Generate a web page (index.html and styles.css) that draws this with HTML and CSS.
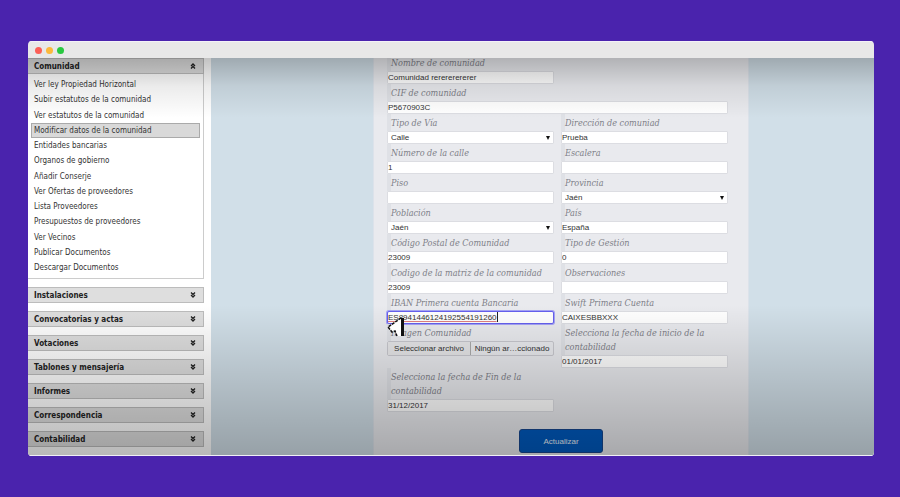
FILE: index.html
```html
<!DOCTYPE html>
<html lang="es">
<head>
  <meta charset="UTF-8">
  <title>Modificar datos de la comunidad</title>
  <link rel="stylesheet" href="styles.css">
</head>
<body>

<div class="window">
  <header class="titlebar">
    <span class="dot red"></span>
    <span class="dot yellow"></span>
    <span class="dot green"></span>
  </header>

  <div class="content">
    <nav class="sidebar">
      <section class="open">
        <button class="group" type="button">Comunidad
          <svg class="chevron up" viewBox="0 0 6 6"><path d="M1 3L3 1L5 3M1 5.5L3 3.5L5 5.5"/></svg>
        </button>
        <div class="links">
          <a href="#">Ver ley Propiedad Horizontal</a>
          <a href="#">Subir estatutos de la comunidad</a>
          <a href="#">Ver estatutos de la comunidad</a>
          <a href="#" class="active">Modificar datos de la comunidad</a>
          <a href="#">Entidades bancarias</a>
          <a href="#">Organos de gobierno</a>
          <a href="#">Añadir Conserje</a>
          <a href="#">Ver Ofertas de proveedores</a>
          <a href="#">Lista Proveedores</a>
          <a href="#">Presupuestos de proveedores</a>
          <a href="#">Ver Vecinos</a>
          <a href="#">Publicar Documentos</a>
          <a href="#">Descargar Documentos</a>
        </div>
      </section>
      <button class="group" type="button">Instalaciones
        <svg class="chevron" viewBox="0 0 6 6"><path d="M1 .5L3 2.5L5 .5M1 3L3 5L5 3"/></svg>
      </button>
      <button class="group" type="button">Convocatorias y actas
        <svg class="chevron" viewBox="0 0 6 6"><path d="M1 .5L3 2.5L5 .5M1 3L3 5L5 3"/></svg>
      </button>
      <button class="group" type="button">Votaciones
        <svg class="chevron" viewBox="0 0 6 6"><path d="M1 .5L3 2.5L5 .5M1 3L3 5L5 3"/></svg>
      </button>
      <button class="group" type="button">Tablones y mensajería
        <svg class="chevron" viewBox="0 0 6 6"><path d="M1 .5L3 2.5L5 .5M1 3L3 5L5 3"/></svg>
      </button>
      <button class="group" type="button">Informes
        <svg class="chevron" viewBox="0 0 6 6"><path d="M1 .5L3 2.5L5 .5M1 3L3 5L5 3"/></svg>
      </button>
      <button class="group" type="button">Correspondencia
        <svg class="chevron" viewBox="0 0 6 6"><path d="M1 .5L3 2.5L5 .5M1 3L3 5L5 3"/></svg>
      </button>
      <button class="group" type="button">Contabilidad
        <svg class="chevron" viewBox="0 0 6 6"><path d="M1 .5L3 2.5L5 .5M1 3L3 5L5 3"/></svg>
      </button>
    </nav>

    <main class="main">
      <form class="form">
        <div class="field first">
          <label for="nombre">Nombre de comunidad</label>
          <input type="text" id="nombre" value="Comunidad rerererererer">
        </div>
        <div class="field wide">
          <label for="cif">CIF de comunidad</label>
          <input type="text" id="cif" value="P5670903C">
        </div>
        <div class="field">
          <label for="tipoVia">Tipo de Vía</label>
          <div class="select"><select id="tipoVia"><option>Calle</option></select></div>
        </div>
        <div class="field">
          <label for="direccion">Dirección de comuniad</label>
          <input type="text" id="direccion" value="Prueba">
        </div>
        <div class="field">
          <label for="numero">Número de la calle</label>
          <input type="text" id="numero" value="1">
        </div>
        <div class="field">
          <label for="escalera">Escalera</label>
          <input type="text" id="escalera">
        </div>
        <div class="field">
          <label for="piso">Piso</label>
          <input type="text" id="piso">
        </div>
        <div class="field">
          <label for="provincia">Provincia</label>
          <div class="select"><select id="provincia"><option>Jaén</option></select></div>
        </div>
        <div class="field">
          <label for="poblacion">Población</label>
          <div class="select"><select id="poblacion"><option>Jaén</option></select></div>
        </div>
        <div class="field">
          <label for="pais">País</label>
          <input type="text" id="pais" value="España">
        </div>
        <div class="field">
          <label for="postal">Código Postal de Comunidad</label>
          <input type="text" id="postal" value="23009">
        </div>
        <div class="field">
          <label for="gestion">Tipo de Gestión</label>
          <input type="text" id="gestion" value="0">
        </div>
        <div class="field">
          <label for="matriz">Codigo de la matriz de la comunidad</label>
          <input type="text" id="matriz" value="23009">
        </div>
        <div class="field">
          <label for="observaciones">Observaciones</label>
          <input type="text" id="observaciones">
        </div>
        <div class="field editing">
          <label for="iban">IBAN Primera cuenta Bancaria</label>
          <input type="text" id="iban" value="ES8941446124192554191260">
          <span class="caret"></span>
          <svg class="pointer" viewBox="0 0 20 20"><path d="M1 10L14 1V19L10 19L8 14L5 15Z" fill="#fff"/><path d="M14 1L1 10L5 15L8 14L10 19" fill="none" stroke="#111" stroke-width="1.5" stroke-dasharray="3 1"/><path d="M14 1H17V19H14Z" fill="#111"/></svg>
        </div>
        <div class="field">
          <label for="swift">Swift Primera Cuenta</label>
          <input type="text" id="swift" value="CAIXESBBXXX">
        </div>
        <div class="field">
          <label for="imagen">Imagen Comunidad</label>
          <label class="file">
            <input type="file" id="imagen">
            <span class="pick">Seleccionar archivo</span>
            <span class="name">Ningún ar…ccionado</span>
          </label>
        </div>
        <div class="field">
          <label for="inicio">Selecciona la fecha de inicio de la contabilidad</label>
          <input type="text" id="inicio" value="01/01/2017">
        </div>
        <div class="field">
          <label for="fin">Selecciona la fecha de Fin de la contabilidad</label>
          <input type="text" id="fin" value="31/12/2017">
        </div>
        <div class="actions">
          <button class="submit" type="submit">Actualizar</button>
        </div>
      </form>
    </main>
  </div>
</div>

</body>
</html>
```

FILE: styles.css
```css
* { box-sizing: border-box; }
body {
  margin: 0;
  height: 100vh;
  padding: 41px 26px 41px 28px;
  background: #4a23ad;
  font-family: "Liberation Sans", Arial, sans-serif;
  font-size: 8px;
}
.window {
  height: 100%;
  display: flex;
  flex-direction: column;
  background: #e8e8e8;
  border-radius: 4px;
  overflow: hidden;
}
.titlebar {
  height: 17px;
  flex: none;
  display: flex;
  align-items: center;
  gap: 4px;
  padding-left: 7px;
  border-top: 1px solid #f3f1f8;
}
.dot { width: 7px; height: 7px; border-radius: 50%; }
.red { background: #fb5f57; }
.yellow { background: #fbb93c; }
.green { background: #28c840; }

.content {
  position: relative;
  flex: 1;
  min-height: 0;
  display: flex;
  background: #fff;
  border-bottom: 1px solid #f0eef6;
  overflow: hidden;
}
/* shade at the top and bottom edges */
.content::after {
  content: "";
  position: absolute;
  inset: 0;
  pointer-events: none;
  background:
    linear-gradient(rgba(0,0,0,.24), rgba(0,0,0,.08) 28px, transparent 60px),
    linear-gradient(to top, rgba(0,0,0,.28), rgba(0,0,0,.17) 60px, transparent 150px);
}

.sidebar {
  width: 183px;
  flex: none;
  display: flex;
  flex-direction: column;
  gap: 8px;
  padding-right: 7px;
  font-family: "DejaVu Sans Condensed", Tahoma, sans-serif;
}
.group {
  width: 100%;
  height: 16px;
  flex: none;
  display: flex;
  align-items: center;
  justify-content: space-between;
  padding: 0 7px 0 6px;
  border: 1px solid #bcbcbc;
  border-left: 0;
  background: #dedede;
  color: #222;
  font-family: inherit;
  font-size: 8px;
  font-weight: bold;
}
.chevron { width: 6px; height: 6px; fill: none; stroke: #222; stroke-width: 1.3; }
.links {
  height: 205px;
  display: flex;
  flex-direction: column;
  justify-content: space-between;
  padding: 3px 3px 3px 0;
  border: 1px solid #ccc;
  border-width: 0 1px 1px 0;
}
.links a {
  margin-left: 3px;
  padding-left: 2px;
  border: 1px solid transparent;
  color: #333;
  line-height: 13px;
  text-decoration: none;
}
.links .active { background: #d9d9d9; border-color: #aaa; }

.main {
  flex: 1;
  display: grid;
  grid-template-columns: 162fr 376fr 125fr;
  background: #d1dfe8;
}
.form {
  grid-column: 2;
  display: grid;
  grid-template-columns: 1fr 1fr;
  column-gap: 7px;
  align-content: start;
  margin-top: -3px;
  padding: 0 20px 0 13px;
  background: #e9eaee;
  border: 1px solid #dce2ea;
  border-width: 0 1px;
}
.field { position: relative; }
.first { grid-column: 1; }
.wide { grid-column: 1 / -1; }
.field > label:first-child {
  display: block;
  padding: 2px 0 1px;
  border-left: 4px solid #dfe1e6;
  color: #7e8088;
  font: italic 9px/14px "DejaVu Serif Condensed", "DejaVu Serif", Georgia, serif;
}
.first > label:first-child { padding-top: 1px; }
input[type="text"], select {
  display: block;
  width: 100%;
  height: 13px;
  padding: 0;
  border: 1px solid #dcdde2;
  border-radius: 1px;
  background: #fff;
  color: #333;
  font-family: inherit;
  font-size: 8px;
  outline: none;
}
select { appearance: none; padding: 0 3px; }
.select { position: relative; }
.select::after {
  content: "";
  position: absolute;
  right: 4px;
  top: 5px;
  border: 2px solid transparent;
  border-top: 4px solid #111;
  border-bottom: 0;
  pointer-events: none;
}
.editing input[type="text"] {
  border-color: #6560ee;
  border-radius: 2px;
  box-shadow: 0 0 0 1px #a5a3f5;
  text-decoration: underline #e08080;
}
.caret {
  position: absolute;
  left: 110px;
  bottom: 2px;
  width: 1px;
  height: 10px;
  background: #222;
}
.pointer {
  position: absolute;
  z-index: 2;
  left: 0;
  top: 23px;
  width: 20px;
  height: 20px;
}
.file {
  display: flex;
  align-items: center;
  height: 15px;
  border: 1px solid #c8c8ce;
  border-radius: 2px;
  color: #333;
}
.file input { position: absolute; opacity: 0; width: 1px; height: 1px; }
.pick {
  flex: 1;
  line-height: 13px;
  text-align: center;
  border-right: 1px solid #aaa;
  background: #e6e6e8;
}
.name { flex: 1; text-align: center; }
.actions {
  grid-column: 1 / -1;
  display: flex;
  justify-content: center;
  margin: 17px -20px 0 -13px;
}
.submit {
  width: 84px;
  height: 24px;
  border: 1px solid #17468c;
  border-radius: 3px;
  background: #0059bd;
  color: #e6effa;
  font-family: inherit;
  font-size: 8px;
}
```
